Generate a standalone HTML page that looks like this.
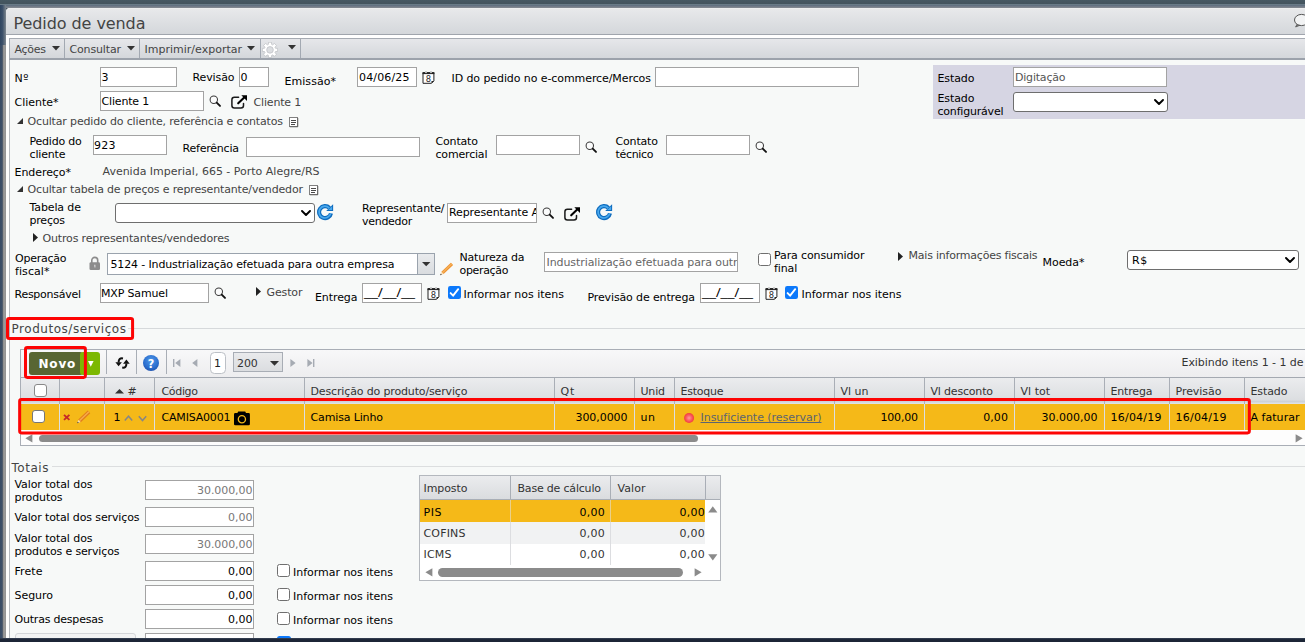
<!DOCTYPE html>
<html lang="pt-BR"><head><meta charset="utf-8"><title>Pedido de venda</title>
<style>

html,body{margin:0;padding:0}
body{width:1305px;height:642px;overflow:hidden;position:relative;background:#465661;font-family:"DejaVu Sans","Liberation Sans",sans-serif;font-size:11px;color:#000}
.t{position:absolute;white-space:nowrap;font-size:11px;line-height:14px}
.in{position:absolute;background:#fff;border:1px solid #a3a3a3;white-space:nowrap;overflow:hidden;font-size:11px}
.sel{position:absolute;background:#fff;border:1px solid #6e6e6e;border-radius:3px;white-space:nowrap;overflow:hidden;font-size:11px}
.sel span{padding-left:4px}
.sel .chev{position:absolute;right:3px;top:50%;margin-top:-3px}
.cb{position:absolute;background:#fff;border:1px solid #6f6f6f;border-radius:2.5px}
.cb.on{background:#0c79fb;border:0;border-radius:2.2px}
.cb.on svg{display:block}
.g{color:#444}
.hc{position:absolute;top:0;height:100%;border-left:1px solid #b4b8be}

</style></head><body>
<div style="position:absolute;left:0px;top:0px;width:1305px;height:4px;background:linear-gradient(#465862,#43535d)"></div>
<div style="position:absolute;left:0px;top:4px;width:1305px;height:1px;background:#687a86"></div>
<div style="position:absolute;left:0px;top:5px;width:1305px;height:3px;background:linear-gradient(#5b6b7d,#878b92)"></div>
<div style="position:absolute;left:0px;top:5px;width:6px;height:633px;background:linear-gradient(90deg,#2f4560 0,#3b4f69 40%,#5d6b7b 72%,#7e8790 100%)"></div>
<div style="position:absolute;left:0px;top:45px;width:6px;height:593px;background:linear-gradient(90deg,#384b65 0,#3d4f68 30%,#56606e 46%,#8c8c8c 52%,#9b9b9b 70%,#999 85%,#8e8e8e)"></div>
<div style="position:absolute;left:6px;top:8px;width:1299px;height:630px;background:#fdfdfd;border-top-left-radius:4px"></div>
<div style="position:absolute;left:9px;top:60px;width:1296px;height:578px;background:#f7f9f8;border-left:1px solid #b6bac0;box-sizing:border-box"></div>
<div style="position:absolute;left:6px;top:8px;width:1299px;height:26px;background:linear-gradient(#eff0f1 0,#e7e8ea 6%,#d4d7db 100%);border-bottom:1px solid #a0a5ad;border-top-left-radius:4px"></div>
<div class="t" style="left:13.5px;top:15px;font-size:16px;line-height:18px;color:#444;letter-spacing:-0.076px;font-family:'DejaVu Sans','Liberation Sans',sans-serif;">Pedido de venda</div>
<svg style="position:absolute;left:1293px;top:13px;" width="14" height="16" viewBox="0 0 14 16"><ellipse cx="8.5" cy="7" rx="7" ry="5.6" fill="#f2f3f4" stroke="#555" stroke-width="1"/><path d="M4.2 11 L2.6 14 L7 12.2" fill="#777" stroke="#555" stroke-width="0.8"/></svg>
<div style="position:absolute;left:6px;top:35px;width:1299px;height:3px;background:#fff"></div>
<div style="position:absolute;left:9px;top:38px;width:1296px;height:19px;background:linear-gradient(#e6e7ea,#d4d7db);border-top:1px solid #a6abb3;border-bottom:2px solid #9ca2ab;border-left:1px solid #a6abb3"></div>
<div class="t" style="left:14.5px;top:43px;color:#444;letter-spacing:-0.277px;">Ações</div>
<svg style="position:absolute;left:52px;top:46px;" width="8" height="5" viewBox="0 0 8 5"><path d="M0 0 H8 L4 4.6 Z" fill="#333"/></svg>
<div style="position:absolute;left:64px;top:39px;width:1px;height:19px;background:#a3a9b2"></div>
<div class="t" style="left:69.5px;top:43px;color:#444;letter-spacing:-0.152px;">Consultar</div>
<svg style="position:absolute;left:127px;top:46px;" width="8" height="5" viewBox="0 0 8 5"><path d="M0 0 H8 L4 4.6 Z" fill="#333"/></svg>
<div style="position:absolute;left:139px;top:39px;width:1px;height:19px;background:#a3a9b2"></div>
<div class="t" style="left:144.5px;top:43px;color:#444;letter-spacing:0.005px;">Imprimir/exportar</div>
<svg style="position:absolute;left:247px;top:46px;" width="8" height="5" viewBox="0 0 8 5"><path d="M0 0 H8 L4 4.6 Z" fill="#333"/></svg>
<div style="position:absolute;left:260px;top:39px;width:1px;height:19px;background:#a3a9b2"></div>
<svg style="position:absolute;left:262px;top:42px;" width="16" height="16" viewBox="0 0 16 16"><path d="M6.32 2.45 L6.53 0.24 L9.47 0.24 L9.68 2.45 L10.66 2.86 L12.37 1.44 L14.46 3.53 L13.04 5.24 L13.45 6.22 L15.66 6.43 L15.66 9.37 L13.45 9.58 L13.04 10.56 L14.46 12.27 L12.37 14.36 L10.66 12.94 L9.68 13.35 L9.47 15.56 L6.53 15.56 L6.32 13.35 L5.34 12.94 L3.63 14.36 L1.54 12.27 L2.96 10.56 L2.55 9.58 L0.34 9.37 L0.34 6.43 L2.55 6.22 L2.96 5.24 L1.54 3.53 L3.63 1.44 L5.34 2.86 Z" fill="#fff" stroke="#bfc1c5" stroke-width="0.8" stroke-linejoin="round"/><circle cx="8" cy="7.9" r="3.3" fill="#dcdee1" stroke="#c0c2c6" stroke-width="0.8"/></svg>
<svg style="position:absolute;left:288px;top:45px;" width="8" height="5" viewBox="0 0 8 5"><path d="M0 0 H8 L4 4.6 Z" fill="#333"/></svg>
<div style="position:absolute;left:300px;top:39px;width:1px;height:19px;background:#a3a9b2"></div>
<div class="t" style="left:14.5px;top:72px;letter-spacing:0.578px;">Nº</div>
<div class="in" style="left:100px;top:67px;width:73px;height:18px;line-height:18px;border-color:#a3a3a3;color:#000;text-align:left;padding:0 1px;"></div>
<div class="t" style="left:101.5px;top:71px;color:#000;">3</div>
<div class="t" style="left:192.5px;top:71px;letter-spacing:-0.115px;">Revisão</div>
<div class="in" style="left:239px;top:67px;width:26px;height:18px;line-height:18px;border-color:#a3a3a3;color:#000;text-align:left;padding:0 1px;"></div>
<div class="t" style="left:240.5px;top:71px;color:#000;letter-spacing:0.5px;">0</div>
<div class="t" style="left:284.5px;top:75px;letter-spacing:0.049px;">Emissão*</div>
<div class="in" style="left:357px;top:67px;width:56px;height:18px;line-height:18px;border-color:#a3a3a3;color:#000;text-align:left;padding:0 1px;"></div>
<div class="t" style="left:359.0px;top:71px;color:#000;letter-spacing:0.156px;">04/06/25</div>
<svg style="position:absolute;left:421.5px;top:71px;" width="14" height="15" viewBox="0 0 14 15"><path d="M1 1.8 H11.9 V9.9 L9.5 12.3 H1 Z" fill="#fff" stroke="#222" stroke-width="1"/><rect x="0.5" y="1.2" width="11.9" height="1.9" fill="#222"/><path d="M3 1.4 Q4 -0.4 5 1.4 Z M8 1.4 Q9 -0.4 10 1.4 Z" fill="#222"/><circle cx="4" cy="1.5" r="0.75" fill="#fff"/><circle cx="9" cy="1.5" r="0.75" fill="#fff"/><path d="M9.5 12.3 V9.9 H11.9 Z" fill="#222"/><text x="6.45" y="10.5" font-size="8.4" text-anchor="middle" fill="#2a2a2a" font-family="'DejaVu Sans','Liberation Sans',sans-serif">8</text></svg>
<div class="t" style="left:451.5px;top:72px;letter-spacing:-0.084px;">ID do pedido no e-commerce/Mercos</div>
<div class="in" style="left:655px;top:67px;width:200px;height:18px;line-height:18px;border-color:#a3a3a3;color:#000;text-align:left;padding:0 1px;"></div>
<div style="position:absolute;left:933px;top:65px;width:372px;height:54px;background:#d6d5e3"></div>
<div class="t" style="left:937.5px;top:72px;letter-spacing:-0.091px;">Estado</div>
<div class="in" style="left:1013px;top:67px;width:150px;height:18px;line-height:18px;border-color:#a3a3a3;color:#000;text-align:left;padding:0 1px;"></div>
<div class="t" style="left:1015.0px;top:71px;color:#555;letter-spacing:-0.205px;">Digitação</div>
<div class="t" style="left:937.5px;top:92px;letter-spacing:-0.091px;">Estado</div>
<div class="t" style="left:937.5px;top:105px;letter-spacing:-0.203px;">configurável</div>
<div class="sel" style="left:1013px;top:92px;width:153px;height:18px;line-height:18px;"><span></span><svg class="chev" width="10" height="6" viewBox="0 0 10 6"><path d="M1 1 L5 5 L9 1" fill="none" stroke="#000" stroke-width="1.9" stroke-linecap="round" stroke-linejoin="round"/></svg></div>
<div class="t" style="left:14.5px;top:96px;letter-spacing:-0.018px;">Cliente*</div>
<div class="in" style="left:100px;top:91px;width:100px;height:18px;line-height:18px;border-color:#a3a3a3;color:#000;text-align:left;padding:0 1px;"></div>
<div class="t" style="left:101.5px;top:95px;color:#000;letter-spacing:-0.17px;">Cliente 1</div>
<svg style="position:absolute;left:209.3px;top:95.4px;" width="13" height="13" viewBox="0 0 13 13"><circle cx="4.8" cy="4.7" r="3.7" fill="#fbfcfc" stroke="#3a3a3a" stroke-width="1.05"/><path d="M7.7 7.6 L11 10.9" stroke="#111" stroke-width="1.9" stroke-linecap="round"/></svg>
<svg style="position:absolute;left:230.8px;top:95px;" width="17" height="15" viewBox="0 0 17 15"><path d="M7.6 2.2 H3.4 Q0.9 2.2 0.9 4.7 V10.6 Q0.9 13.1 3.4 13.1 H10 Q12.5 13.1 12.5 10.6 V8.6" fill="none" stroke="#1a1a1a" stroke-width="1.5" stroke-linecap="round"/><path d="M7.2 8.3 L13.2 2.6" stroke="#000" stroke-width="2.1" stroke-linecap="round"/><path d="M10.3 0.3 H16 V6 Z" fill="#000"/></svg>
<div class="t" style="left:253.5px;top:96px;color:#444;letter-spacing:-0.17px;">Cliente 1</div>
<svg style="position:absolute;left:17px;top:118px;" width="6" height="6" viewBox="0 0 6 6"><path d="M6 0 L6 6 L0 6 Z" fill="#333"/></svg>
<div class="t" style="left:27.5px;top:115px;color:#444;letter-spacing:-0.157px;">Ocultar pedido do cliente, referência e contatos</div>
<svg style="position:absolute;left:289px;top:117px;" width="10" height="11" viewBox="0 0 10 11"><rect x="0.5" y="0.5" width="8" height="9" fill="#fff" stroke="#808080" stroke-width="1"/><path d="M8.8 1 V9.8 H0.8" fill="none" stroke="#5a5a5a" stroke-width="0.8"/><path d="M2 3.5 H7 M2 5.5 H7 M2 7.5 H5.5" stroke="#4a4a4a" stroke-width="1" shape-rendering="crispEdges"/></svg>
<div class="t" style="left:29.5px;top:135px;letter-spacing:-0.215px;">Pedido do</div>
<div class="t" style="left:29.5px;top:148px;letter-spacing:-0.164px;">cliente</div>
<div class="in" style="left:93px;top:135px;width:70px;height:18px;line-height:18px;border-color:#a3a3a3;color:#000;text-align:left;padding:0 1px;"></div>
<div class="t" style="left:94.0px;top:139px;color:#000;letter-spacing:0.25px;">923</div>
<div class="t" style="left:182.5px;top:142px;letter-spacing:-0.214px;">Referência</div>
<div class="in" style="left:246px;top:137px;width:170px;height:18px;line-height:18px;border-color:#a3a3a3;color:#000;text-align:left;padding:0 1px;"></div>
<div class="t" style="left:435.5px;top:135px;letter-spacing:-0.164px;">Contato</div>
<div class="t" style="left:435.5px;top:148px;letter-spacing:-0.182px;">comercial</div>
<div class="in" style="left:496px;top:135px;width:80px;height:18px;line-height:18px;border-color:#a3a3a3;color:#000;text-align:left;padding:0 1px;"></div>
<svg style="position:absolute;left:585.4px;top:140.5px;" width="13" height="13" viewBox="0 0 13 13"><circle cx="4.8" cy="4.7" r="3.7" fill="#fbfcfc" stroke="#3a3a3a" stroke-width="1.05"/><path d="M7.7 7.6 L11 10.9" stroke="#111" stroke-width="1.9" stroke-linecap="round"/></svg>
<div class="t" style="left:615.5px;top:135px;letter-spacing:-0.164px;">Contato</div>
<div class="t" style="left:615.5px;top:148px;letter-spacing:-0.323px;">técnico</div>
<div class="in" style="left:666px;top:135px;width:80px;height:18px;line-height:18px;border-color:#a3a3a3;color:#000;text-align:left;padding:0 1px;"></div>
<svg style="position:absolute;left:755.4px;top:140.5px;" width="13" height="13" viewBox="0 0 13 13"><circle cx="4.8" cy="4.7" r="3.7" fill="#fbfcfc" stroke="#3a3a3a" stroke-width="1.05"/><path d="M7.7 7.6 L11 10.9" stroke="#111" stroke-width="1.9" stroke-linecap="round"/></svg>
<div class="t" style="left:14.5px;top:166px;letter-spacing:-0.062px;">Endereço*</div>
<div class="t" style="left:102.5px;top:165px;color:#444;letter-spacing:-0.005px;">Avenida Imperial, 665 - Porto Alegre/RS</div>
<svg style="position:absolute;left:17px;top:186px;" width="6" height="6" viewBox="0 0 6 6"><path d="M6 0 L6 6 L0 6 Z" fill="#333"/></svg>
<div class="t" style="left:27.5px;top:183px;color:#444;letter-spacing:-0.157px;">Ocultar tabela de preços e representante/vendedor</div>
<svg style="position:absolute;left:309px;top:185px;" width="10" height="11" viewBox="0 0 10 11"><rect x="0.5" y="0.5" width="8" height="9" fill="#fff" stroke="#808080" stroke-width="1"/><path d="M8.8 1 V9.8 H0.8" fill="none" stroke="#5a5a5a" stroke-width="0.8"/><path d="M2 3.5 H7 M2 5.5 H7 M2 7.5 H5.5" stroke="#4a4a4a" stroke-width="1" shape-rendering="crispEdges"/></svg>
<div class="t" style="left:29.5px;top:201px;letter-spacing:-0.117px;">Tabela de</div>
<div class="t" style="left:29.5px;top:214px;letter-spacing:-0.209px;">preços</div>
<div class="sel" style="left:115px;top:203px;width:198px;height:18px;line-height:18px;"><span></span><svg class="chev" width="10" height="6" viewBox="0 0 10 6"><path d="M1 1 L5 5 L9 1" fill="none" stroke="#000" stroke-width="1.9" stroke-linecap="round" stroke-linejoin="round"/></svg></div>
<svg style="position:absolute;left:317px;top:203.8px;" width="17" height="17" viewBox="0 0 17 17"><path d="M14 9.3 A6 6 0 1 1 12.4 3.9" fill="none" stroke="#0e6cbe" stroke-width="4.1"/><path d="M9.2 6.9 H16.1 V0.2 Z" fill="#0e6cbe"/><path d="M13.7 9.4 A5.9 5.9 0 1 1 12.2 4" fill="none" stroke="#49a9ee" stroke-width="1.7"/><path d="M11.2 5.9 H15.1 V2.3 Z" fill="#49a9ee"/></svg>
<div class="t" style="left:362.0px;top:202px;letter-spacing:-0.133px;">Representante/</div>
<div class="t" style="left:362.0px;top:215px;letter-spacing:-0.283px;">vendedor</div>
<div class="in" style="left:447px;top:203px;width:86px;height:18px;line-height:18px;border-color:#a3a3a3;color:#000;text-align:left;padding:0 1px;"></div>
<div class="t" style="left:449px;top:206px;width:87px;overflow:hidden;letter-spacing:-0.1px">Representante A</div>
<svg style="position:absolute;left:542.4px;top:207.4px;" width="13" height="13" viewBox="0 0 13 13"><circle cx="4.8" cy="4.7" r="3.7" fill="#fbfcfc" stroke="#3a3a3a" stroke-width="1.05"/><path d="M7.7 7.6 L11 10.9" stroke="#111" stroke-width="1.9" stroke-linecap="round"/></svg>
<svg style="position:absolute;left:563.8px;top:206.7px;" width="17" height="15" viewBox="0 0 17 15"><path d="M7.6 2.2 H3.4 Q0.9 2.2 0.9 4.7 V10.6 Q0.9 13.1 3.4 13.1 H10 Q12.5 13.1 12.5 10.6 V8.6" fill="none" stroke="#1a1a1a" stroke-width="1.5" stroke-linecap="round"/><path d="M7.2 8.3 L13.2 2.6" stroke="#000" stroke-width="2.1" stroke-linecap="round"/><path d="M10.3 0.3 H16 V6 Z" fill="#000"/></svg>
<svg style="position:absolute;left:595.9px;top:203.7px;" width="17" height="17" viewBox="0 0 17 17"><path d="M14 9.3 A6 6 0 1 1 12.4 3.9" fill="none" stroke="#0e6cbe" stroke-width="4.1"/><path d="M9.2 6.9 H16.1 V0.2 Z" fill="#0e6cbe"/><path d="M13.7 9.4 A5.9 5.9 0 1 1 12.2 4" fill="none" stroke="#49a9ee" stroke-width="1.7"/><path d="M11.2 5.9 H15.1 V2.3 Z" fill="#49a9ee"/></svg>
<svg style="position:absolute;left:33px;top:233px;" width="5" height="9" viewBox="0 0 5 9"><path d="M0 0 L5 4.5 L0 9 Z" fill="#222"/></svg>
<div class="t" style="left:42.5px;top:232px;color:#444;letter-spacing:-0.154px;">Outros representantes/vendedores</div>
<div class="t" style="left:15.0px;top:252px;letter-spacing:-0.243px;">Operação</div>
<div class="t" style="left:15.0px;top:265px;letter-spacing:0.081px;">fiscal*</div>
<svg style="position:absolute;left:88.5px;top:255.7px;" width="12" height="15" viewBox="0 0 12 15"><path d="M2.8 7 V4.3 A2.95 2.95 0 0 1 8.7 4.3 V7" fill="none" stroke="#8c8c8c" stroke-width="1.6"/><rect x="0.5" y="6.3" width="10.5" height="7.7" rx="1.3" fill="#8c8c8c"/><path d="M5.2 8.8 h1.2 v2.6 h-0.8 z" fill="#e6e6e6"/></svg>
<div class="in" style="left:107px;top:253px;width:307px;height:20px;line-height:20px;border-color:#9aa3ad;color:#000;text-align:left;padding:0 1px;"></div>
<div class="t" style="left:110.5px;top:258px;letter-spacing:-0.141px;">5124 - Industrialização efetuada para outra empresa</div>
<div style="position:absolute;left:417px;top:253px;width:18px;height:22px;background:linear-gradient(#e9ebed,#d9dcdf);border:1px solid #9aa3ad;box-sizing:border-box"></div>
<svg style="position:absolute;left:421.8px;top:262px;" width="9" height="5" viewBox="0 0 9 5"><path d="M0 0 H8.4 L4.2 4.3 Z" fill="#333"/></svg>
<svg style="position:absolute;left:439.7px;top:261.8px;" width="14" height="14" viewBox="0 0 14 14"><path d="M2.5 10.9 L12 1.9" stroke="#ee9230" stroke-width="3.2" /><path d="M2.4 10.8 L11.9 1.8" stroke="#f6b25a" stroke-width="1.2" /><path d="M0.2 13.2 L1.3 9.9 L3.7 12.1 Z" fill="#f6dcb4"/><path d="M0.2 13.2 L0.7 11.7 L1.8 12.7 Z" fill="#222"/></svg>
<div class="t" style="left:459.5px;top:251px;letter-spacing:-0.205px;">Natureza da</div>
<div class="t" style="left:459.5px;top:264px;letter-spacing:-0.324px;">operação</div>
<div class="in" style="left:544px;top:252px;width:190px;height:18px;line-height:18px;border-color:#a3a3a3;color:#000;text-align:left;padding:0 1px;"></div>
<div class="t" style="left:546.5px;top:256px;width:190px;overflow:hidden;color:#666;letter-spacing:-0.08px">Industrialização efetuada para outra</div>
<div class="cb" style="left:758px;top:253px;width:11px;height:11px"></div>
<div class="t" style="left:774.0px;top:249px;letter-spacing:-0.115px;">Para consumidor</div>
<div class="t" style="left:774.0px;top:262px;letter-spacing:-0.113px;">final</div>
<svg style="position:absolute;left:898px;top:252px;" width="5" height="9" viewBox="0 0 5 9"><path d="M0 0 L5 4.5 L0 9 Z" fill="#222"/></svg>
<div class="t" style="left:908.5px;top:249px;color:#444;letter-spacing:-0.215px;">Mais informações fiscais</div>
<div class="t" style="left:1042.5px;top:256px;letter-spacing:-0.044px;">Moeda*</div>
<div class="sel" style="left:1127px;top:250px;width:170px;height:18px;line-height:18px;"><span></span><svg class="chev" width="10" height="6" viewBox="0 0 10 6"><path d="M1 1 L5 5 L9 1" fill="none" stroke="#000" stroke-width="1.9" stroke-linecap="round" stroke-linejoin="round"/></svg></div>
<div class="t" style="left:1131.9px;top:254px;letter-spacing:0.8px;">R$</div>
<div class="t" style="left:14.5px;top:288px;letter-spacing:-0.264px;">Responsável</div>
<div class="in" style="left:100px;top:283px;width:105px;height:18px;line-height:18px;border-color:#a3a3a3;color:#000;text-align:left;padding:0 1px;"></div>
<div class="t" style="left:101.0px;top:287px;color:#000;letter-spacing:-0.155px;">MXP Samuel</div>
<svg style="position:absolute;left:214.4px;top:287.4px;" width="13" height="13" viewBox="0 0 13 13"><circle cx="4.8" cy="4.7" r="3.7" fill="#fbfcfc" stroke="#3a3a3a" stroke-width="1.05"/><path d="M7.7 7.6 L11 10.9" stroke="#111" stroke-width="1.9" stroke-linecap="round"/></svg>
<svg style="position:absolute;left:256px;top:287px;" width="5" height="9" viewBox="0 0 5 9"><path d="M0 0 L5 4.5 L0 9 Z" fill="#222"/></svg>
<div class="t" style="left:266.5px;top:286px;color:#444;letter-spacing:-0.119px;">Gestor</div>
<div class="t" style="left:315.0px;top:291px;letter-spacing:-0.086px;">Entrega</div>
<div class="in" style="left:362px;top:283px;width:56px;height:18px;line-height:18px;border-color:#a3a3a3;color:#000;text-align:left;padding:0 1px;"></div>
<div class="t" style="left:364.0px;top:286.4px;color:#000;transform:scaleX(1.263);transform-origin:0 0;">__/__/__</div>
<svg style="position:absolute;left:426.5px;top:287px;" width="14" height="15" viewBox="0 0 14 15"><path d="M1 1.8 H11.9 V9.9 L9.5 12.3 H1 Z" fill="#fff" stroke="#222" stroke-width="1"/><rect x="0.5" y="1.2" width="11.9" height="1.9" fill="#222"/><path d="M3 1.4 Q4 -0.4 5 1.4 Z M8 1.4 Q9 -0.4 10 1.4 Z" fill="#222"/><circle cx="4" cy="1.5" r="0.75" fill="#fff"/><circle cx="9" cy="1.5" r="0.75" fill="#fff"/><path d="M9.5 12.3 V9.9 H11.9 Z" fill="#222"/><text x="6.45" y="10.5" font-size="8.4" text-anchor="middle" fill="#2a2a2a" font-family="'DejaVu Sans','Liberation Sans',sans-serif">8</text></svg>
<div class="cb on" style="left:448px;top:286px;width:13px;height:13px"><svg width="13" height="13" viewBox="0 0 13 13"><path d="M2.6 7.1 L5.1 9.7 L10.2 3.2" fill="none" stroke="#fff" stroke-width="1.9" stroke-linecap="round" stroke-linejoin="round"/></svg></div>
<div class="t" style="left:463.5px;top:288px;letter-spacing:0.006px;">Informar nos itens</div>
<div class="t" style="left:587.5px;top:291px;letter-spacing:-0.129px;">Previsão de entrega</div>
<div class="in" style="left:700px;top:283px;width:56px;height:18px;line-height:18px;border-color:#a3a3a3;color:#000;text-align:left;padding:0 1px;"></div>
<div class="t" style="left:702.0px;top:286.4px;color:#000;transform:scaleX(1.263);transform-origin:0 0;">__/__/__</div>
<svg style="position:absolute;left:764.5px;top:287px;" width="14" height="15" viewBox="0 0 14 15"><path d="M1 1.8 H11.9 V9.9 L9.5 12.3 H1 Z" fill="#fff" stroke="#222" stroke-width="1"/><rect x="0.5" y="1.2" width="11.9" height="1.9" fill="#222"/><path d="M3 1.4 Q4 -0.4 5 1.4 Z M8 1.4 Q9 -0.4 10 1.4 Z" fill="#222"/><circle cx="4" cy="1.5" r="0.75" fill="#fff"/><circle cx="9" cy="1.5" r="0.75" fill="#fff"/><path d="M9.5 12.3 V9.9 H11.9 Z" fill="#222"/><text x="6.45" y="10.5" font-size="8.4" text-anchor="middle" fill="#2a2a2a" font-family="'DejaVu Sans','Liberation Sans',sans-serif">8</text></svg>
<div class="cb on" style="left:785px;top:286px;width:13px;height:13px"><svg width="13" height="13" viewBox="0 0 13 13"><path d="M2.6 7.1 L5.1 9.7 L10.2 3.2" fill="none" stroke="#fff" stroke-width="1.9" stroke-linecap="round" stroke-linejoin="round"/></svg></div>
<div class="t" style="left:801.5px;top:288px;letter-spacing:-0.024px;">Informar nos itens</div>
<div style="position:absolute;left:128px;top:328px;width:1177px;height:1px;background:#d6d9db"></div>
<div class="t" style="left:11.5px;top:321.7px;font-size:12px;line-height:14px;color:#444;letter-spacing:0.538px;">Produtos/serviços</div>
<div style="position:absolute;left:20px;top:349px;width:1290px;height:95px;border:1px solid #a9aeb6;background:#fdfdfd"></div>
<div style="position:absolute;left:21px;top:350px;width:1284px;height:27px;background:linear-gradient(#f8f8f9,#ededef)"></div>
<div style="position:absolute;left:29px;top:352px;width:54px;height:22.6px;background:#586632;border-radius:3px"></div>
<div style="position:absolute;left:80.3px;top:352px;width:19.7px;height:22.6px;background:#7cb802;border-radius:3px"></div>
<div class="t" style="left:38.5px;top:357px;font-size:12px;line-height:14px;color:#fff;letter-spacing:0.8px;font-family:'DejaVu Sans','Liberation Sans',sans-serif;font-weight:bold;">Novo</div>
<svg style="position:absolute;left:87.7px;top:361.1px;" width="6" height="6" viewBox="0 0 6 6"><path d="M0 0 H5.6 L2.8 5.7 Z" fill="#fff"/></svg>
<div style="position:absolute;left:106px;top:350px;width:1px;height:24px;background:#a9aeb6"></div>
<svg style="position:absolute;left:114.5px;top:357px;" width="16" height="12" viewBox="0 0 16 12"><path d="M8 1.4 Q3.6 0.6 3.6 5.6" fill="none" stroke="#111" stroke-width="2"/><path d="M0.4 5.2 H6.9 L3.6 9.3 Z" fill="#111"/><path d="M7.2 10.6 Q11.4 11.4 11.4 6.4" fill="none" stroke="#111" stroke-width="2"/><path d="M8.1 6.8 H14.7 L11.4 2.6 Z" fill="#111"/></svg>
<div style="position:absolute;left:136px;top:350px;width:1px;height:24px;background:#a9aeb6"></div>
<svg style="position:absolute;left:143px;top:355px;" width="17" height="17" viewBox="0 0 17 17"><defs><radialGradient id="hg" cx="0.5" cy="0.35" r="0.75"><stop offset="0" stop-color="#4f97e8"/><stop offset="0.6" stop-color="#2c6fcf"/><stop offset="1" stop-color="#1a48a2"/></radialGradient></defs><circle cx="8" cy="8" r="8" fill="url(#hg)"/><text x="8" y="12.6" font-size="12.5" font-weight="bold" text-anchor="middle" fill="#fff" font-family="'DejaVu Sans Condensed','Liberation Sans',sans-serif">?</text></svg>
<div style="position:absolute;left:166px;top:350px;width:1px;height:24px;background:#a9aeb6"></div>
<svg style="position:absolute;left:172.5px;top:359px;" width="8" height="8" viewBox="0 0 8 8"><rect x="0" y="0" width="1.4" height="8" fill="#a6abb3"/><path d="M7.4 0 V8 L2.2 4 Z" fill="#a6abb3"/></svg>
<svg style="position:absolute;left:191.5px;top:359px;" width="6" height="8" viewBox="0 0 6 8"><path d="M5.4 0 V8 L0.2 4 Z" fill="#a6abb3"/></svg>
<div style="position:absolute;left:210.3px;top:352.2px;width:13.6px;height:19.6px;border:1px solid #bcc0c6;border-radius:4.5px;background:#fff"></div>
<div class="t" style="left:214.0px;top:356.7px;color:#222;">1</div>
<div style="position:absolute;left:233px;top:352px;width:48px;height:18px;background:linear-gradient(#e9eaec,#dbdde0);border:1px solid #a8adb5"></div>
<div class="t" style="left:237.1px;top:356.7px;color:#333;letter-spacing:-0.15px;">200</div>
<svg style="position:absolute;left:270px;top:361px;" width="9" height="5" viewBox="0 0 9 5"><path d="M0 0 H9 L4.5 4.8 Z" fill="#333"/></svg>
<svg style="position:absolute;left:289.5px;top:359px;" width="6" height="8" viewBox="0 0 6 8"><path d="M0.4 0 V8 L5.6 4 Z" fill="#a6abb3"/></svg>
<svg style="position:absolute;left:306.5px;top:359px;" width="8" height="8" viewBox="0 0 8 8"><path d="M0.4 0 V8 L5.6 4 Z" fill="#a6abb3"/><rect x="6" y="0" width="1.4" height="8" fill="#a6abb3"/></svg>
<div class="t" style="left:1181.5px;top:356px;color:#333;letter-spacing:-0.058px;">Exibindo itens 1 - 1 de</div>
<div style="position:absolute;left:21px;top:377px;width:1284px;height:26.6px;background:linear-gradient(#ebecee 0,#dcdee1 84%,#ccd1d6 90%,#e2e5e8 100%);border-top:1px solid #a4a9b1;box-sizing:border-box"></div>
<div style="position:absolute;left:59px;top:378px;width:1px;height:25.5px;background:#a9aeb6"></div>
<div style="position:absolute;left:104px;top:378px;width:1px;height:25.5px;background:#a9aeb6"></div>
<div style="position:absolute;left:154px;top:378px;width:1px;height:25.5px;background:#a9aeb6"></div>
<div style="position:absolute;left:304px;top:378px;width:1px;height:25.5px;background:#a9aeb6"></div>
<div style="position:absolute;left:554px;top:378px;width:1px;height:25.5px;background:#a9aeb6"></div>
<div style="position:absolute;left:634px;top:378px;width:1px;height:25.5px;background:#a9aeb6"></div>
<div style="position:absolute;left:674px;top:378px;width:1px;height:25.5px;background:#a9aeb6"></div>
<div style="position:absolute;left:834px;top:378px;width:1px;height:25.5px;background:#a9aeb6"></div>
<div style="position:absolute;left:924px;top:378px;width:1px;height:25.5px;background:#a9aeb6"></div>
<div style="position:absolute;left:1014px;top:378px;width:1px;height:25.5px;background:#a9aeb6"></div>
<div style="position:absolute;left:1104px;top:378px;width:1px;height:25.5px;background:#a9aeb6"></div>
<div style="position:absolute;left:1169px;top:378px;width:1px;height:25.5px;background:#a9aeb6"></div>
<div style="position:absolute;left:1244px;top:378px;width:1px;height:25.5px;background:#a9aeb6"></div>
<div class="cb" style="left:34px;top:384px;width:11px;height:11px;border-color:#888;border-radius:3px"></div>
<svg style="position:absolute;left:115px;top:389px;" width="9" height="5" viewBox="0 0 9 5"><path d="M0 4.6 H9 L4.5 0 Z" fill="#333"/></svg>
<div class="t" style="left:127.5px;top:385px;color:#333;letter-spacing:-0.6px;">#</div>
<div class="t" style="left:161.5px;top:385px;color:#333;letter-spacing:-0.334px;">Código</div>
<div class="t" style="left:310.5px;top:385px;color:#333;letter-spacing:-0.144px;">Descrição do produto/serviço</div>
<div class="t" style="left:560.5px;top:385px;color:#333;letter-spacing:0.766px;">Qt</div>
<div class="t" style="left:640.5px;top:385px;color:#333;letter-spacing:-0.188px;">Unid</div>
<div class="t" style="left:680.5px;top:385px;color:#333;letter-spacing:-0.242px;">Estoque</div>
<div class="t" style="left:840.5px;top:385px;color:#333;letter-spacing:-0.008px;">Vl un</div>
<div class="t" style="left:930.5px;top:385px;color:#333;letter-spacing:-0.186px;">Vl desconto</div>
<div class="t" style="left:1020.5px;top:385px;color:#333;letter-spacing:0.032px;">Vl tot</div>
<div class="t" style="left:1110.5px;top:385px;color:#333;letter-spacing:-0.169px;">Entrega</div>
<div class="t" style="left:1175.5px;top:385px;color:#333;letter-spacing:-0.038px;">Previsão</div>
<div class="t" style="left:1250.5px;top:385px;color:#333;letter-spacing:-0.091px;">Estado</div>
<div style="position:absolute;left:21px;top:403.5px;width:1284px;height:26.5px;background:#f5b918"></div>
<div style="position:absolute;left:59px;top:403.5px;width:1px;height:26.5px;background:#dcdfe1"></div>
<div style="position:absolute;left:104px;top:403.5px;width:1px;height:26.5px;background:#dcdfe1"></div>
<div style="position:absolute;left:154px;top:403.5px;width:1px;height:26.5px;background:#dcdfe1"></div>
<div style="position:absolute;left:304px;top:403.5px;width:1px;height:26.5px;background:#dcdfe1"></div>
<div style="position:absolute;left:554px;top:403.5px;width:1px;height:26.5px;background:#dcdfe1"></div>
<div style="position:absolute;left:634px;top:403.5px;width:1px;height:26.5px;background:#dcdfe1"></div>
<div style="position:absolute;left:674px;top:403.5px;width:1px;height:26.5px;background:#dcdfe1"></div>
<div style="position:absolute;left:834px;top:403.5px;width:1px;height:26.5px;background:#dcdfe1"></div>
<div style="position:absolute;left:924px;top:403.5px;width:1px;height:26.5px;background:#dcdfe1"></div>
<div style="position:absolute;left:1014px;top:403.5px;width:1px;height:26.5px;background:#dcdfe1"></div>
<div style="position:absolute;left:1104px;top:403.5px;width:1px;height:26.5px;background:#dcdfe1"></div>
<div style="position:absolute;left:1169px;top:403.5px;width:1px;height:26.5px;background:#dcdfe1"></div>
<div style="position:absolute;left:1244px;top:403.5px;width:1px;height:26.5px;background:#dcdfe1"></div>
<div class="cb" style="left:32px;top:410px;width:11px;height:11px;border-color:#777;border-radius:3px"></div>
<svg style="position:absolute;left:63px;top:414.1px;" width="8" height="7" viewBox="0 0 8 7"><path d="M1 0.9 L6.4 5.9 M6.4 0.9 L1 5.9" stroke="#c62828" stroke-width="1.9"/></svg>
<svg style="position:absolute;left:77px;top:409.8px;" width="14" height="14" viewBox="0 0 14 14"><path d="M2.5 10.9 L12 1.9" stroke="#e27c1c" stroke-width="3.6" /><path d="M2.4 10.8 L11.9 1.8" stroke="#f5ad4c" stroke-width="1.5" /><path d="M0.2 13.2 L1.3 9.9 L3.7 12.1 Z" fill="#f6dcb4"/><path d="M0.2 13.2 L0.7 11.7 L1.8 12.7 Z" fill="#222"/></svg>
<div class="t" style="left:113.5px;top:411px;letter-spacing:-0.6px;">1</div>
<svg style="position:absolute;left:123.5px;top:414.5px;" width="9" height="7" viewBox="0 0 9 7"><path d="M0.8 5.4 L4.5 1.2 L8.2 5.4" fill="none" stroke="#868686" stroke-width="1.5"/></svg>
<svg style="position:absolute;left:137.6px;top:414.5px;" width="9" height="7" viewBox="0 0 9 7"><path d="M0.8 1.2 L4.5 5.6 L8.2 1.2" fill="none" stroke="#868686" stroke-width="1.5"/></svg>
<div class="t" style="left:161.5px;top:411px;letter-spacing:-0.184px;">CAMISA0001</div>
<svg style="position:absolute;left:234px;top:410.6px;" width="17" height="15" viewBox="0 0 17 15"><path d="M0 3.4 Q0 2.1 1.3 2.1 H3.4 L4.2 0.4 H11.2 L12 2.1 H14.6 Q15.9 2.1 15.9 3.4 V13 Q15.9 14.3 14.6 14.3 H1.3 Q0 14.3 0 13 Z" fill="#000"/><circle cx="7.9" cy="8.2" r="3.6" fill="none" stroke="#f5b918" stroke-width="1.3"/></svg>
<div class="t" style="left:310.5px;top:411px;letter-spacing:-0.139px;">Camisa Linho</div>
<div class="t" style="left:575.5px;top:411px;letter-spacing:-0.071px;">300,0000</div>
<div class="t" style="left:640.5px;top:411px;letter-spacing:0.547px;">un</div>
<svg style="position:absolute;left:684px;top:413px;" width="11" height="11" viewBox="0 0 11 11"><defs><radialGradient id="rd" cx="0.5" cy="0.5" r="0.5"><stop offset="0" stop-color="#ff9a9a"/><stop offset="0.55" stop-color="#fb5f62"/><stop offset="1" stop-color="#f23b3e"/></radialGradient></defs><circle cx="5.05" cy="5" r="5" fill="url(#rd)"/></svg>
<div class="t" style="left:700.5px;top:411px;color:#5c6470;letter-spacing:-0.032px;text-decoration:underline;text-underline-offset:1px;">Insuficiente (reservar)</div>
<div class="t" style="left:880.5px;top:411px;letter-spacing:-0.2px;">100,00</div>
<div class="t" style="left:983.3px;top:411px;letter-spacing:0.033px;">0,00</div>
<div class="t" style="left:1041.5px;top:411px;letter-spacing:0.002px;">30.000,00</div>
<div class="t" style="left:1110.5px;top:411px;letter-spacing:0.228px;">16/04/19</div>
<div class="t" style="left:1175.5px;top:411px;letter-spacing:0.228px;">16/04/19</div>
<div class="t" style="left:1250.5px;top:411px;letter-spacing:0.035px;">A faturar</div>
<svg style="position:absolute;left:25px;top:434px;" width="8" height="9" viewBox="0 0 8 9"><path d="M7.4 0.2 V8.4 L0.4 4.3 Z" fill="#8b8b8b"/></svg>
<div style="position:absolute;left:39px;top:435px;width:659px;height:7px;background:#8b8b8b;border-radius:4px"></div>
<svg style="position:absolute;left:1295px;top:434px;" width="8" height="9" viewBox="0 0 8 9"><path d="M0.6 0.2 V8.4 L7.6 4.3 Z" fill="#8b8b8b"/></svg>
<svg style="position:absolute;left:6.0px;top:316.8px;overflow:visible;" width="128.1" height="23.099999999999966" viewBox="0 0 128.1 23.099999999999966"><rect x="1.5" y="1.5" width="125.1" height="20.099999999999966" rx="1.8" fill="none" stroke="#fd0404" stroke-width="3"/></svg>
<svg style="position:absolute;left:24.0px;top:345.9px;overflow:visible;" width="62.900000000000006" height="32.900000000000034" viewBox="0 0 62.900000000000006 32.900000000000034"><rect x="1.5" y="1.5" width="59.900000000000006" height="29.900000000000034" rx="1.8" fill="none" stroke="#fd0404" stroke-width="3"/></svg>
<svg style="position:absolute;left:18.0px;top:398.0px;overflow:visible;" width="1233.0" height="36.39999999999998" viewBox="0 0 1233.0 36.39999999999998"><rect x="1.5" y="1.5" width="1230.0" height="33.39999999999998" rx="1.8" fill="none" stroke="#fd0404" stroke-width="3"/></svg>
<div style="position:absolute;left:52px;top:466px;width:1253px;height:1px;background:#dcdedf"></div>
<div class="t" style="left:11.5px;top:460.7px;font-size:12px;line-height:14px;color:#444;letter-spacing:0.544px;">Totais</div>
<div class="t" style="left:14.5px;top:478px;letter-spacing:-0.094px;">Valor total dos</div>
<div class="t" style="left:14.5px;top:491px;letter-spacing:-0.105px;">produtos</div>
<div class="in" style="left:145px;top:480px;width:105px;height:18px;line-height:18px;border-color:#a3a3a3;color:#000;text-align:left;padding:0 1px;"></div>
<div class="t" style="left:197.0px;top:484px;color:#777;letter-spacing:-0.061px;">30.000,00</div>
<div class="t" style="left:14.5px;top:511px;letter-spacing:-0.126px;">Valor total dos serviços</div>
<div class="in" style="left:145px;top:507px;width:105px;height:18px;line-height:18px;border-color:#a3a3a3;color:#000;text-align:left;padding:0 1px;"></div>
<div class="t" style="left:228.0px;top:511px;color:#777;">0,00</div>
<div class="t" style="left:14.5px;top:532px;letter-spacing:-0.094px;">Valor total dos</div>
<div class="t" style="left:14.5px;top:545px;letter-spacing:-0.143px;">produtos e serviços</div>
<div class="in" style="left:145px;top:534px;width:105px;height:18px;line-height:18px;border-color:#a3a3a3;color:#000;text-align:left;padding:0 1px;"></div>
<div class="t" style="left:197.0px;top:538px;color:#777;letter-spacing:-0.061px;">30.000,00</div>
<div class="t" style="left:14.5px;top:565px;letter-spacing:0.086px;">Frete</div>
<div class="in" style="left:145px;top:561px;width:105px;height:18px;line-height:18px;border-color:#a3a3a3;color:#000;text-align:left;padding:0 1px;"></div>
<div class="t" style="left:228.0px;top:565px;color:#000;">0,00</div>
<div class="cb" style="left:277px;top:564px;width:11px;height:11px"></div>
<div class="t" style="left:293.0px;top:566px;letter-spacing:-0.024px;">Informar nos itens</div>
<div class="t" style="left:14.5px;top:589px;letter-spacing:-0.044px;">Seguro</div>
<div class="in" style="left:145px;top:585px;width:105px;height:18px;line-height:18px;border-color:#a3a3a3;color:#000;text-align:left;padding:0 1px;"></div>
<div class="t" style="left:228.0px;top:589px;color:#000;">0,00</div>
<div class="cb" style="left:277px;top:588px;width:11px;height:11px"></div>
<div class="t" style="left:293.0px;top:590px;letter-spacing:-0.024px;">Informar nos itens</div>
<div class="t" style="left:14.5px;top:613px;letter-spacing:-0.205px;">Outras despesas</div>
<div class="in" style="left:145px;top:609px;width:105px;height:18px;line-height:18px;border-color:#a3a3a3;color:#000;text-align:left;padding:0 1px;"></div>
<div class="t" style="left:228.0px;top:613px;color:#000;">0,00</div>
<div class="cb" style="left:277px;top:612px;width:11px;height:11px"></div>
<div class="t" style="left:293.0px;top:614px;letter-spacing:-0.024px;">Informar nos itens</div>
<div style="position:absolute;left:15px;top:633px;width:119px;height:8px;border:1px solid #d4d6d9;border-radius:3px;background:#f3f4f4"></div>
<div class="in" style="left:145px;top:633px;width:105px;height:8px;line-height:8px;border-color:#a3a3a3;color:#000;text-align:left;padding:0 1px;"></div>
<div style="position:absolute;left:277px;top:636px;width:14px;height:6px;background:#0c79fb;border-radius:2.5px 2.5px 0 0"></div>
<div style="position:absolute;left:419px;top:475px;width:300px;height:104px;border:1px solid #b4b8be;background:#fff"></div>
<div style="position:absolute;left:420px;top:476px;width:300px;height:24px;background:linear-gradient(#ebecee,#dadcdf);border-bottom:1px solid #a9aeb6;box-sizing:border-box"></div>
<div style="position:absolute;left:510px;top:476px;width:1px;height:24px;background:#a9aeb6"></div>
<div style="position:absolute;left:610px;top:476px;width:1px;height:24px;background:#a9aeb6"></div>
<div style="position:absolute;left:705px;top:476px;width:1px;height:24px;background:#a9aeb6"></div>
<div class="t" style="left:423.5px;top:482px;color:#333;letter-spacing:-0.076px;">Imposto</div>
<div class="t" style="left:517.5px;top:482px;color:#333;letter-spacing:-0.192px;">Base de cálculo</div>
<div class="t" style="left:617.5px;top:482px;color:#333;letter-spacing:0.066px;">Valor</div>
<div style="position:absolute;left:420px;top:500px;width:285px;height:22px;background:#f5b918"></div>
<div style="position:absolute;left:420px;top:522px;width:285px;height:22px;background:#f1f2f3"></div>
<div style="position:absolute;left:420px;top:544px;width:285px;height:21px;background:#fff"></div>
<div style="position:absolute;left:510px;top:500px;width:1px;height:22px;background:#e9d08a"></div>
<div style="position:absolute;left:510px;top:522px;width:1px;height:43px;background:#dcdde0"></div>
<div style="position:absolute;left:610px;top:500px;width:1px;height:22px;background:#e9d08a"></div>
<div style="position:absolute;left:610px;top:522px;width:1px;height:43px;background:#dcdde0"></div>
<div class="t" style="left:423.5px;top:506px;color:#000;letter-spacing:0.562px;">PIS</div>
<div class="t" style="left:579.5px;top:506px;color:#000;letter-spacing:0.25px;">0,00</div>
<div class="t" style="left:679.5px;top:506px;color:#000;letter-spacing:0.25px;">0,00</div>
<div class="t" style="left:423.5px;top:527px;color:#333;letter-spacing:0.175px;">COFINS</div>
<div class="t" style="left:579.5px;top:527px;color:#333;letter-spacing:0.25px;">0,00</div>
<div class="t" style="left:679.5px;top:527px;color:#333;letter-spacing:0.25px;">0,00</div>
<div class="t" style="left:423.5px;top:548px;color:#333;letter-spacing:0.198px;">ICMS</div>
<div class="t" style="left:579.5px;top:548px;color:#333;letter-spacing:0.25px;">0,00</div>
<div class="t" style="left:679.5px;top:548px;color:#333;letter-spacing:0.25px;">0,00</div>
<svg style="position:absolute;left:708px;top:506px;" width="10" height="7" viewBox="0 0 10 7"><path d="M0.2 6.6 H9.4 L4.8 0.2 Z" fill="#8b8b8b"/></svg>
<svg style="position:absolute;left:708px;top:554px;" width="10" height="7" viewBox="0 0 10 7"><path d="M0.2 0.2 H9.4 L4.8 6.6 Z" fill="#8b8b8b"/></svg>
<svg style="position:absolute;left:425px;top:568px;" width="8" height="9" viewBox="0 0 8 9"><path d="M7.4 0.2 V8.4 L0.4 4.3 Z" fill="#8b8b8b"/></svg>
<div style="position:absolute;left:438px;top:568px;width:245px;height:9px;background:#8b8b8b;border-radius:5px"></div>
<svg style="position:absolute;left:694px;top:568px;" width="8" height="9" viewBox="0 0 8 9"><path d="M0.6 0.2 V8.4 L7.6 4.3 Z" fill="#8b8b8b"/></svg>
<div style="position:absolute;left:0px;top:638px;width:1305px;height:4px;background:linear-gradient(#3a4658,#1c2536 40%,#1c2536)"></div>
</body></html>
